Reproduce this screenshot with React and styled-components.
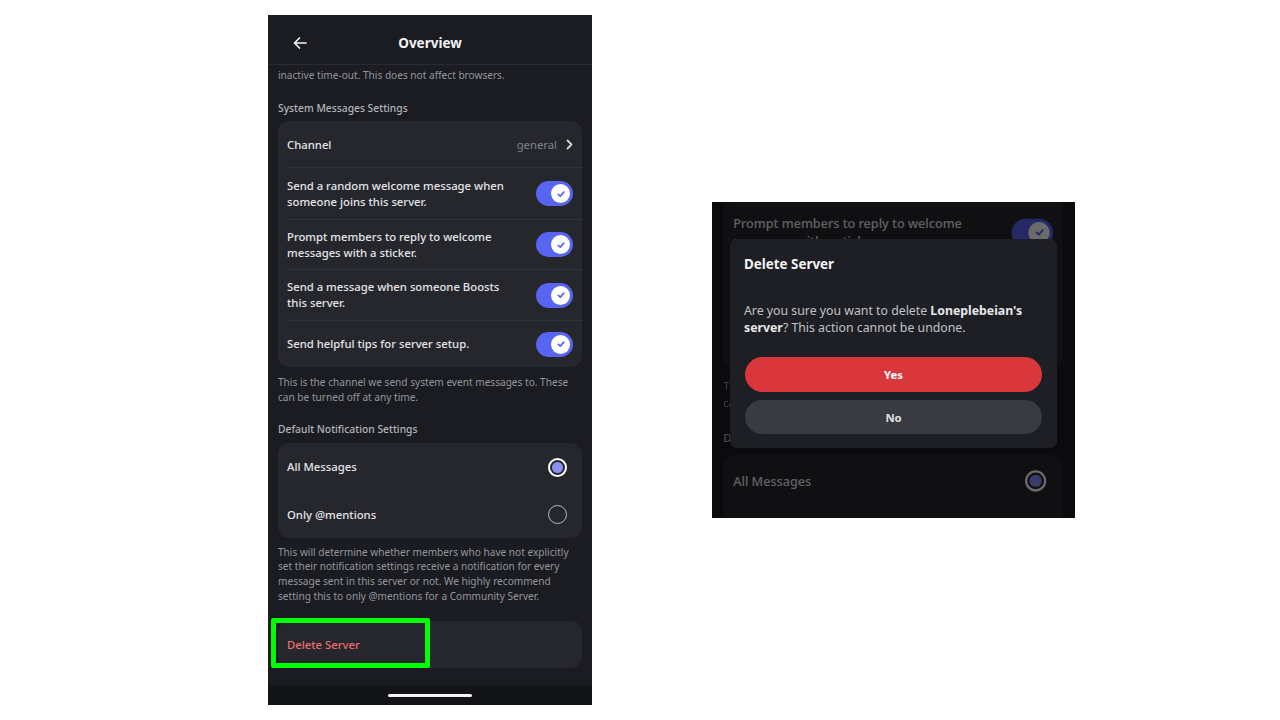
import styled, { createGlobalStyle } from 'styled-components'

const GlobalStyle = createGlobalStyle`
    html, body {
        margin: 0;
        background: #ffffff;
    }
    body {
        font-family: "Noto Sans", "Open Sans", sans-serif;
    }
`

const Stage = styled.div`
    width: 1280px;
    height: 720px;
    box-sizing: border-box;
    padding-left: 268px;
    display: flex;
    align-items: center;
    gap: 120px;
`

const Phone = styled.div`
    width: 324px;
    height: 690px;
    background: #1b1c21;
    display: flex;
    flex-direction: column;
    overflow: hidden;
`

const Header = styled.div`
    height: 50px;
    flex-shrink: 0;
    box-sizing: border-box;
    padding: 7px 24px 0;
    border-bottom: 1px solid #2a2b31;
    display: grid;
    grid-template-columns: 1fr auto 1fr;
    align-items: center;
    position: relative;
    z-index: 1;
    background: #1b1c21;

    h1 {
        margin: 0;
        font-size: 13.5px;
        font-weight: 700;
        color: #f2f3f5;
    }
`

const BackButton = styled.span`
    display: flex;
    align-items: center;
    color: #f2f3f5;
`

const Scroll = styled.div`
    flex: 1;
    overflow: hidden;
    display: flex;
    flex-direction: column;
`

const Body = styled.div`
    padding: 0 10px;
    margin-top: ${p => p.$offset}px;
    display: flex;
    flex-direction: column;
`

const Note = styled.p`
    margin: ${p => p.$mt || 0}px 0 0;
    font-size: 10.1px;
    line-height: ${p => p.$lh || 15}px;
    color: #94969d;

    span {
        display: block;
        white-space: nowrap;
    }
`

const SectionLabel = styled.div`
    margin-top: ${p => p.$mt}px;
    font-size: 10.3px;
    line-height: 15px;
    font-weight: 500;
    color: #b3b5bb;
`

const Card = styled.div`
    margin-top: ${p => p.$mt}px;
    background: #26272d;
    border-radius: 11px;
    display: flex;
    flex-direction: column;
    position: relative;
`

const Row = styled.div`
    height: ${p => p.$h}px;
    box-sizing: border-box;
    margin-left: 9px;
    padding-right: 9px;
    display: flex;
    align-items: center;
    justify-content: space-between;
    gap: 12px;
    border-top: 1px solid ${p => p.$divided ? '#32333a' : 'transparent'};
`

const RowText = styled.div`
    font-size: 11.3px;
    line-height: 16px;
    font-weight: 500;
    color: ${p => p.$danger ? '#ef6a6e' : '#e4e5e9'};
    max-width: 230px;
`

const Value = styled.div`
    display: flex;
    align-items: center;
    gap: 9px;
    font-size: 11.3px;
    color: #7f838c;
`

const Toggle = styled.span`
    width: 37px;
    height: 25px;
    flex-shrink: 0;
    box-sizing: border-box;
    border-radius: 13px;
    background: #5865f2;
    padding: 3px;
    display: flex;
    justify-content: flex-end;
    align-items: center;
`

const Thumb = styled.span`
    width: 19px;
    height: 19px;
    border-radius: 50%;
    background: #ffffff;
    display: flex;
    align-items: center;
    justify-content: center;
`

const Radio = styled.span`
    width: 19px;
    height: 19px;
    box-sizing: border-box;
    margin-right: 6px;
    border-radius: 50%;
    border: ${p => p.$on ? '2px solid #ffffff' : '1.5px solid #b3b5bb'};
    display: flex;
    align-items: center;
    justify-content: center;

    &::after {
        content: '';
        width: 11px;
        height: 11px;
        border-radius: 50%;
        background: ${p => p.$on ? '#8890f3' : 'transparent'};
    }
`

const Highlight = styled.span`
    position: absolute;
    left: -7px;
    top: -3px;
    width: 159px;
    height: 50px;
    box-sizing: border-box;
    border: 5px solid #00ff00;
    border-radius: 2px;
`

const HomeBar = styled.div`
    height: 20px;
    flex-shrink: 0;
    background: #131417;
    display: flex;
    align-items: center;
    justify-content: center;

    &::after {
        content: '';
        width: 84px;
        height: 3px;
        border-radius: 2px;
        background: #f2f2f2;
    }
`

const Crop = styled.div`
    width: 363px;
    height: 316px;
    position: relative;
    overflow: hidden;
    background: #1b1c21;
`

const Zoomed = styled.div`
    width: 324px;
    transform-origin: 0 0;
    transform: scale(1.118);
    display: flex;
    flex-direction: column;
`

const Dim = styled.div`
    position: absolute;
    inset: 0;
    background: rgba(0, 0, 0, 0.58);
    display: flex;
    justify-content: center;
    align-items: flex-start;
    padding-top: 37px;
`

const Dialog = styled.div`
    width: 327px;
    box-sizing: border-box;
    background: #1e1f24;
    border-radius: 7px;
    padding: 16px 15px 14px;
    display: flex;
    flex-direction: column;

    h2 {
        margin: 0 0 0 -1px;
        font-size: 13.4px;
        line-height: 18px;
        font-weight: 700;
        color: #f2f3f5;
    }

    p {
        margin: 29px 0 21px -1px;
        font-size: 12.3px;
        line-height: 17px;
        color: #c0c2c7;
    }

    b {
        color: #e6e7ea;
        font-weight: 700;
    }
`

const DialogButton = styled.button`
    height: ${p => p.$danger ? 35 : 34}px;
    margin-top: ${p => p.$danger ? 0 : 8}px;
    border: none;
    border-radius: 18px;
    background: ${p => p.$danger ? '#da373c' : '#393b43'};
    color: ${p => p.$danger ? '#ffffff' : '#e0e1e5'};
    font-family: inherit;
    font-size: 11.3px;
    font-weight: 700;
`

const Check = () => (
    <svg width='10' height='10' viewBox='0 0 10 10'>
        <path d='M2.3 5.3 L4.3 7.1 L7.8 3.1' fill='none' stroke='#5865f2' strokeWidth='1.7' strokeLinecap='round' strokeLinejoin='round' />
    </svg>
)

const Chevron = () => (
    <svg width='7' height='11' viewBox='0 0 7 11'>
        <path d='M1.5 1.5 L5.5 5.5 L1.5 9.5' fill='none' stroke='#d2d4d8' strokeWidth='1.8' strokeLinecap='round' strokeLinejoin='round' />
    </svg>
)

const ArrowLeft = () => (
    <svg width='16' height='16' viewBox='0 0 16 16'>
        <path d='M14 8 H2.5 M7.5 3 L2.5 8 L7.5 13' fill='none' stroke='currentColor' strokeWidth='1.7' strokeLinecap='round' strokeLinejoin='round' />
    </svg>
)

const Switch = () => (
    <Toggle>
        <Thumb><Check /></Thumb>
    </Toggle>
)

const systemRows = [
    { h: 52, text: 'Send a random welcome message when someone joins this server.' },
    { h: 50, text: 'Prompt members to reply to welcome messages with a sticker.' },
    { h: 51, text: 'Send a message when someone Boosts this server.' },
    { h: 47, text: 'Send helpful tips for server setup.' }
]

const SettingsBody = ({ offset, annotated }) => (
    <Body $offset={offset}>
        <Note>
            <span>Mobile users will be moved to the AFK channel after the</span>
            <span>inactive time-out. This does not affect browsers.</span>
        </Note>
        <SectionLabel $mt={18}>System Messages Settings</SectionLabel>
        <Card $mt={5.5}>
            <Row $h={46}>
                <RowText>Channel</RowText>
                <Value>general <Chevron /></Value>
            </Row>
            {systemRows.map(row => (
                <Row key={row.text} $h={row.h} $divided>
                    <RowText>{row.text}</RowText>
                    <Switch />
                </Row>
            ))}
        </Card>
        <Note $mt={7.5}>
            This is the channel we send system event messages to. These can be turned off at any time.
        </Note>
        <SectionLabel $mt={17}>Default Notification Settings</SectionLabel>
        <Card $mt={6.5}>
            <Row $h={47}>
                <RowText>All Messages</RowText>
                <Radio $on />
            </Row>
            <Row $h={48}>
                <RowText>Only @mentions</RowText>
                <Radio />
            </Row>
        </Card>
        <Note $mt={6.5} $lh={14.7}>
            This will determine whether members who have not explicitly set their notification settings receive a notification for every message sent in this server or not. We highly recommend setting this to only @mentions for a Community Server.
        </Note>
        <Card $mt={17.7}>
            <Row $h={47}>
                <RowText $danger>Delete Server</RowText>
            </Row>
            {annotated && <Highlight />}
        </Card>
    </Body>
)

export default function App() {
    return (
        <>
            <GlobalStyle />
            <Stage>
                <Phone>
                    <Header>
                        <BackButton><ArrowLeft /></BackButton>
                        <h1>Overview</h1>
                        <span />
                    </Header>
                    <Scroll>
                        <SettingsBody offset={-12.5} annotated />
                    </Scroll>
                    <HomeBar />
                </Phone>
                <Crop>
                    <Zoomed>
                        <SettingsBody offset={-165} />
                    </Zoomed>
                    <Dim>
                        <Dialog>
                            <h2>Delete Server</h2>
                            <p>Are you sure you want to delete <b>Loneplebeian's server</b>? This action cannot be undone.</p>
                            <DialogButton $danger>Yes</DialogButton>
                            <DialogButton>No</DialogButton>
                        </Dialog>
                    </Dim>
                </Crop>
            </Stage>
        </>
    )
}
